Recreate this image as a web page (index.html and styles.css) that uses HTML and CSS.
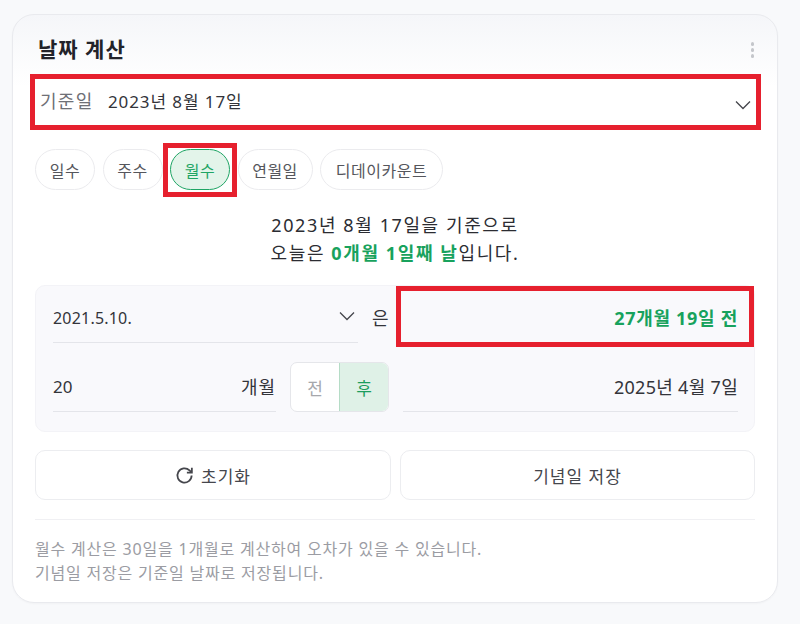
FILE: index.html
```html
<!DOCTYPE html>
<html lang="ko">
<head>
 <meta charset="UTF-8">
 <title>날짜 계산</title>
 <link rel="stylesheet" href="styles.css">
</head>
<body>
<div class="card">
 <div class="card-head">
  <h2 class="title">날짜 계산</h2>
  <span class="more"><i></i><i></i><i></i></span>
 </div>

 <div class="base-date marked">
  <span class="base-label">기준일</span>
  <span class="base-value">2023년 8월 17일</span>
  <svg class="chevron base-chevron" viewBox="0 0 16 10"><path d="M1 1.5l7 7 7-7"/></svg>
  <span class="red-box"></span>
 </div>

 <div class="chips">
  <button class="chip">일수</button>
  <button class="chip">주수</button>
  <button class="chip chip-on marked">월수<span class="red-box red-box-chip"></span></button>
  <button class="chip">연월일</button>
  <button class="chip">디데이카운트</button>
 </div>

 <p class="summary">2023년 8월 17일을 기준으로<br>오늘은 <b>0개월 1일째 날</b>입니다.</p>

 <div class="panel">
  <div class="panel-cell">
   <div class="field field-date">
    <span>2021.5.10.</span>
    <svg class="chevron date-chevron" viewBox="0 0 16 10"><path d="M1 1.5l7 7 7-7"/></svg>
   </div>
   <span class="particle">은</span>
  </div>
  <div class="result marked">
   27개월 19일 전
   <span class="red-box red-box-result"></span>
  </div>
  <div class="panel-cell">
   <div class="field field-months">
    <span>20</span>
    <span class="unit">개월</span>
   </div>
   <div class="toggle">
    <span class="toggle-item">전</span>
    <span class="toggle-item toggle-on">후</span>
   </div>
  </div>
  <div class="field field-target">2025년 4월 7일</div>
 </div>

 <div class="actions">
  <button class="action">
   <svg class="reload" viewBox="0 0 16 16"><path d="M14 8a6 6 0 1 1-1.8-4.3L14 5.4"/><path d="M14.2 1.4v4.2H10"/></svg>
   초기화
  </button>
  <button class="action">기념일 저장</button>
 </div>

 <p class="note">월수 계산은 30일을 1개월로 계산하여 오차가 있을 수 있습니다.<br>기념일 저장은 기준일 날짜로 저장됩니다.</p>
</div>
</body>
</html>
```

FILE: styles.css
```css
* {
 box-sizing: border-box;
}
body {
 margin: 0;
 height: 624px;
 padding: 14px 22px 0 12px;
 background: #f8f9fb;
 color: #33343a;
 font-family: "Noto Sans", "Noto Sans CJK KR", sans-serif;
 overflow: hidden;
}
button {
 font-family: inherit;
 color: inherit;
 background: #fff;
 cursor: pointer;
}
.card {
 height: 589px;
 padding: 0 22px;
 background: linear-gradient(#f5f6f9, #fff 72px);
 border: 1px solid #e9eaee;
 border-radius: 22px;
 box-shadow: 0 1px 2px rgba(0, 0, 0, 0.03);
}
.card-head {
 display: flex;
 align-items: center;
 justify-content: space-between;
 height: 64px;
 padding: 6px 0 0 3px;
}
.title {
 margin: 0 0 4px;
 font-size: 21px;
 font-weight: 700;
 letter-spacing: 1px;
 color: #22232a;
}
.more {
 display: flex;
 flex-direction: column;
 gap: 2.5px;
 margin-right: 1px;
}
.more i {
 width: 3.5px;
 height: 3.5px;
 border-radius: 50%;
 background: #c4c6cb;
}
.marked {
 position: relative;
}
/* red annotation boxes sit over the page */
.red-box {
 position: absolute;
 top: -5px;
 left: -5px;
 right: -6px;
 bottom: -5px;
 border: 5px solid #e6202e;
 pointer-events: none;
}
.red-box-chip {
 top: -7px;
 left: -8px;
 right: -8px;
 bottom: -8px;
}
.red-box-result {
 top: 0;
 left: -7px;
 right: -16px;
 bottom: auto;
 height: 61px;
}
.base-date {
 display: flex;
 align-items: center;
 height: 46px;
 background: #fff;
 padding: 0 5px 4px;
 font-size: 17px;
}
.base-label {
 width: 68px;
 font-size: 18px;
 letter-spacing: 1.3px;
 color: #6f7076;
}
.base-value {
 letter-spacing: 0.9px;
}
.base-chevron {
 margin-left: auto;
 margin-top: 9px;
 margin-right: -1px;
}
.chevron {
 flex: none;
 width: 16px;
 height: 10px;
}
.chevron path {
 fill: none;
 stroke: #45464c;
 stroke-width: 1.3;
}
.chips {
 display: grid;
 grid-template-columns: 60px 60px 60px 75px 123px;
 gap: 7.5px;
 margin-top: 24px;
}
.chip {
 position: relative;
 height: 41px;
 padding: 0;
 border: 1px solid #ebebee;
 border-radius: 21px;
 font-size: 16px;
 letter-spacing: 0.5px;
 color: #55565c;
}
.chip-on {
 background: #e3f4ea;
 border-color: #1fa565;
 color: #1fa565;
}
.summary {
 margin: 21px 0 0;
 text-align: center;
 font-size: 18px;
 letter-spacing: 1.6px;
 line-height: 28px;
 color: #2b2c32;
}
.summary b {
 color: #18a25d;
}
.panel {
 display: grid;
 grid-template-columns: 336px 335px;
 grid-template-rows: 57px 69px;
 column-gap: 14px;
 margin-top: 18px;
 height: 147px;
 padding-left: 17px;
 background: #f9f9fc;
 border: 1px solid #f3f3f7;
 border-radius: 10px;
}
.panel-cell {
 display: flex;
 align-items: flex-end;
 gap: 14px;
}
.field {
 display: flex;
 align-items: center;
 justify-content: space-between;
 border-bottom: 1px solid #e4e5ea;
 font-size: 17px;
 color: #33343a;
}
.field-date {
 width: 305px;
 height: 50px;
 padding: 0 3px 0 0;
 font-size: 16px;
 letter-spacing: 0.2px;
}
.date-chevron {
 margin-bottom: 3px;
}
.field-months {
 width: 223px;
 height: 49px;
 padding-bottom: 2px;
}
.unit {
 font-size: 18px;
 letter-spacing: 1px;
}
.field-target {
 justify-content: flex-end;
 align-self: end;
 height: 49px;
 padding-bottom: 2px;
 font-size: 18px;
 letter-spacing: 0.3px;
}
.particle {
 font-size: 18px;
 margin: 0 0 13px 0;
}
.result {
 display: flex;
 align-items: flex-end;
 justify-content: flex-end;
 height: 44px;
 font-size: 18px;
 font-weight: 700;
 letter-spacing: 0.7px;
 color: #18a25d;
}
.toggle {
 display: flex;
 flex: none;
 width: 99px;
 height: 50px;
 background: #fff;
 border: 1px solid #e5e6ea;
 border-radius: 7px;
 overflow: hidden;
 font-size: 17px;
}
.toggle-item {
 display: flex;
 flex: 1;
 align-items: center;
 justify-content: center;
 color: #a6a7ac;
}
.toggle-on {
 background: #dff1e7;
 border-left: 1px solid #b5dcc6;
 color: #1b9d5c;
}
.actions {
 display: grid;
 grid-template-columns: 356px 355px;
 gap: 9px;
 margin-top: 18px;
}
.action {
 display: flex;
 align-items: center;
 justify-content: center;
 gap: 7px;
 height: 50px;
 border: 1px solid #ecedf0;
 border-radius: 10px;
 font-size: 17px;
 letter-spacing: 1px;
 color: #45464c;
}
.reload {
 width: 19px;
 height: 19px;
 fill: none;
 stroke: #45464c;
 stroke-width: 1.5;
}
.note {
 margin: 19px 0 0;
 padding-top: 17px;
 border-top: 1px solid #f0f0f3;
 font-size: 16px;
 letter-spacing: 0.8px;
 line-height: 24px;
 color: #9b9ca3;
}
```
